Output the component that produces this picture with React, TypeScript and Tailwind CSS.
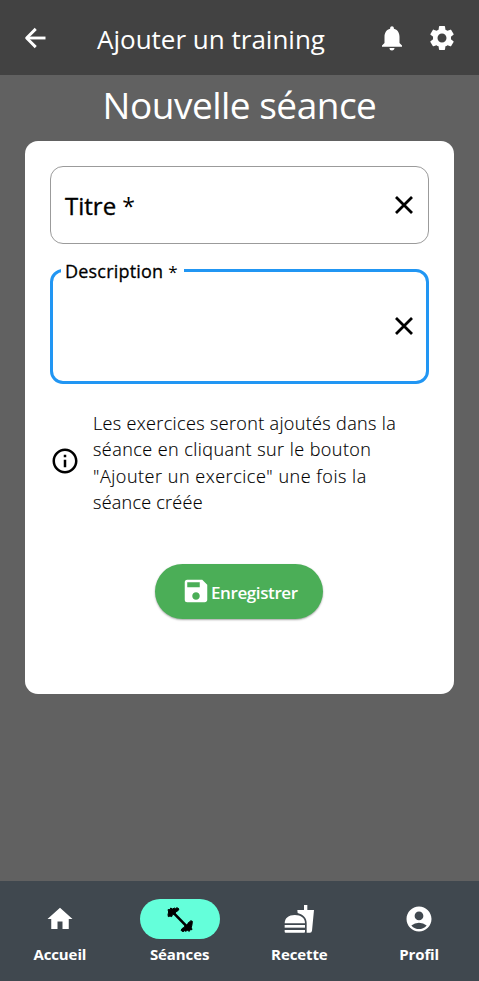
import { MdNotifications, MdSettings, MdInfoOutline, MdSave, MdHome, MdAccountCircle } from "react-icons/md";

function BackArrow() {
  return (
    <svg width="30" height="30" viewBox="0 0 24 24" className="ml-5" fill="none" stroke="#fff" strokeWidth="2.3">
      <path d="M20.400 12H6" />
      <path d="M12.600 4.700L5.300 12l7.300 7.300" strokeLinejoin="round" />
    </svg>
  );
}

function Cross() {
  return (
    <svg width="30" height="30" viewBox="0 0 24 24" stroke="#000" strokeWidth="2.2">
      <path d="M5.600 5.600L18.400 18.400M18.400 5.600L5.600 18.400" />
    </svg>
  );
}

function Dumbbell() {
  return (
    <svg width="30" height="30" viewBox="15 15 90 90">
      <path d="M42 43 L78 80" stroke="#000" strokeWidth="8" />
      <path
        d="M24 47 L26 39 L24 32 L30 32 L32 27 L38 30 L43 27 L46 29 L51 26 L57 30 L53 36 L47 39 L44 46 L38 46 L35 53 L30 51 L25 53 Z"
        stroke="#000" strokeWidth="3" strokeLinejoin="round"
      />
      <path
        d="M96 77 L94 85 L96 92 L90 92 L88 97 L82 94 L77 97 L74 95 L69 98 L63 94 L67 88 L73 85 L76 78 L82 78 L85 71 L90 68 L92 65 L97 67 Z"
        stroke="#000" strokeWidth="3" strokeLinejoin="round"
      />
    </svg>
  );
}

function Burger() {
  return (
    <svg width="30" height="30" viewBox="133 102 90 90" fill="currentColor">
      <path d="M193 105h10v15h20l-6 62q-1 6-6 6h-10v-28c0-17-10-26-27-31l-1-9h20z" />
      <path d="M135 160c0-16 12-25 30.500-25s30.500 9 30.500 25z" />
      <path d="M135 165h61v8h-61z" />
      <path d="M135 180h61v5q0 3-3 3h-55q-3 0-3-3z" />
    </svg>
  );
}

const tabs = [
  { label: "Accueil", icon: <MdHome size={30} /> },
  { label: "Séances", icon: <Dumbbell />, active: true },
  { label: "Recette", icon: <Burger /> },
  { label: "Profil", icon: <MdAccountCircle size={30} /> },
];

export default function App() {
  return (
    <div className="flex h-[981px] w-[479px] flex-col overflow-hidden bg-[#616161] font-['Open_Sans',sans-serif]">
      <header className="flex h-[75px] shrink-0 items-center bg-[#424242] text-white">
        <BackArrow />
        <h1 className="ml-[47px] flex-1 whitespace-nowrap pt-0.5 text-[26px] leading-9">Ajouter un training</h1>
        <MdNotifications size={30} className="mr-5" />
        <MdSettings size={30} className="mr-[22px]" />
      </header>
      <main className="flex flex-1 flex-col items-center">
        <h2 className="h-[66px] whitespace-nowrap pt-1 text-[37px] leading-[52px] tracking-[-0.5px] text-white">Nouvelle séance</h2>
        <section className="flex h-[553px] w-[429px] flex-col rounded-[13px] bg-white px-[25px] pt-[25px]">
          <div className="flex h-[78px] shrink-0 items-center justify-between rounded-[13px] border border-[#9b9b9b] pl-[14px] pr-[9px]">
            <span className="pt-0.5 text-[24px] [-webkit-text-stroke:0.35px_black]">Titre <span className="text-[23px] [-webkit-text-stroke:0px]">*</span></span>
            <Cross />
          </div>
          <fieldset className="mt-[15px] h-[125px] shrink-0 rounded-[13px] border-[3px] border-[#2196f3] pl-[8px] pr-[7px]">
            <legend className="h-[22px] whitespace-nowrap pl-[4px] pr-[6px] text-[18px] leading-[24px] tracking-[0.2px] [-webkit-text-stroke:0.3px_black]">
              Description <span className="text-[17px] [-webkit-text-stroke:0px]">*</span>
            </legend>
            <div className="flex h-[89px] items-center justify-end"><Cross /></div>
          </fieldset>
          <div className="mt-[26px] flex items-center">
            <MdInfoOutline size={30} className="-mt-[3px] shrink-0" />
            <p className="ml-[13px] whitespace-nowrap text-[18px] font-light leading-[26.4px] [-webkit-text-stroke:0.15px_black]">
              <span className="block tracking-[0.35px]">Les exercices seront ajoutés dans la</span>
              <span className="block tracking-[0.45px]">séance en cliquant sur le bouton</span>
              <span className="block tracking-[0.53px]">"Ajouter un exercice" une fois la</span>
              <span className="block tracking-[0.25px]">séance créée</span>
            </p>
          </div>
          <button className="mt-[48px] mr-px flex h-[55px] w-[168px] shrink-0 items-center self-center rounded-full bg-[#4bae57] pl-[26px] text-white shadow-[0_1px_2px_rgba(0,0,0,0.35)]">
            <MdSave size={30} />
            <span className="pt-[3px] text-[17px] font-semibold tracking-[-0.4px]">Enregistrer</span>
          </button>
        </section>
      </main>
      <nav className="flex h-[100px] shrink-0 bg-[#40484f] text-white">
        {tabs.map((t) => (
          <div key={t.label} className="flex flex-1 flex-col items-center pt-[17.6px]">
            <div className={t.active ? "flex h-10 w-20 items-center justify-center rounded-full bg-[#64ffda]" : "flex h-10 w-20 items-center justify-center"}>{t.icon}</div>
            <span className="mt-[4.4px] text-[15px] font-bold leading-[22px] tracking-[-0.1px]">{t.label}</span>
          </div>
        ))}
      </nav>
    </div>
  );
}
